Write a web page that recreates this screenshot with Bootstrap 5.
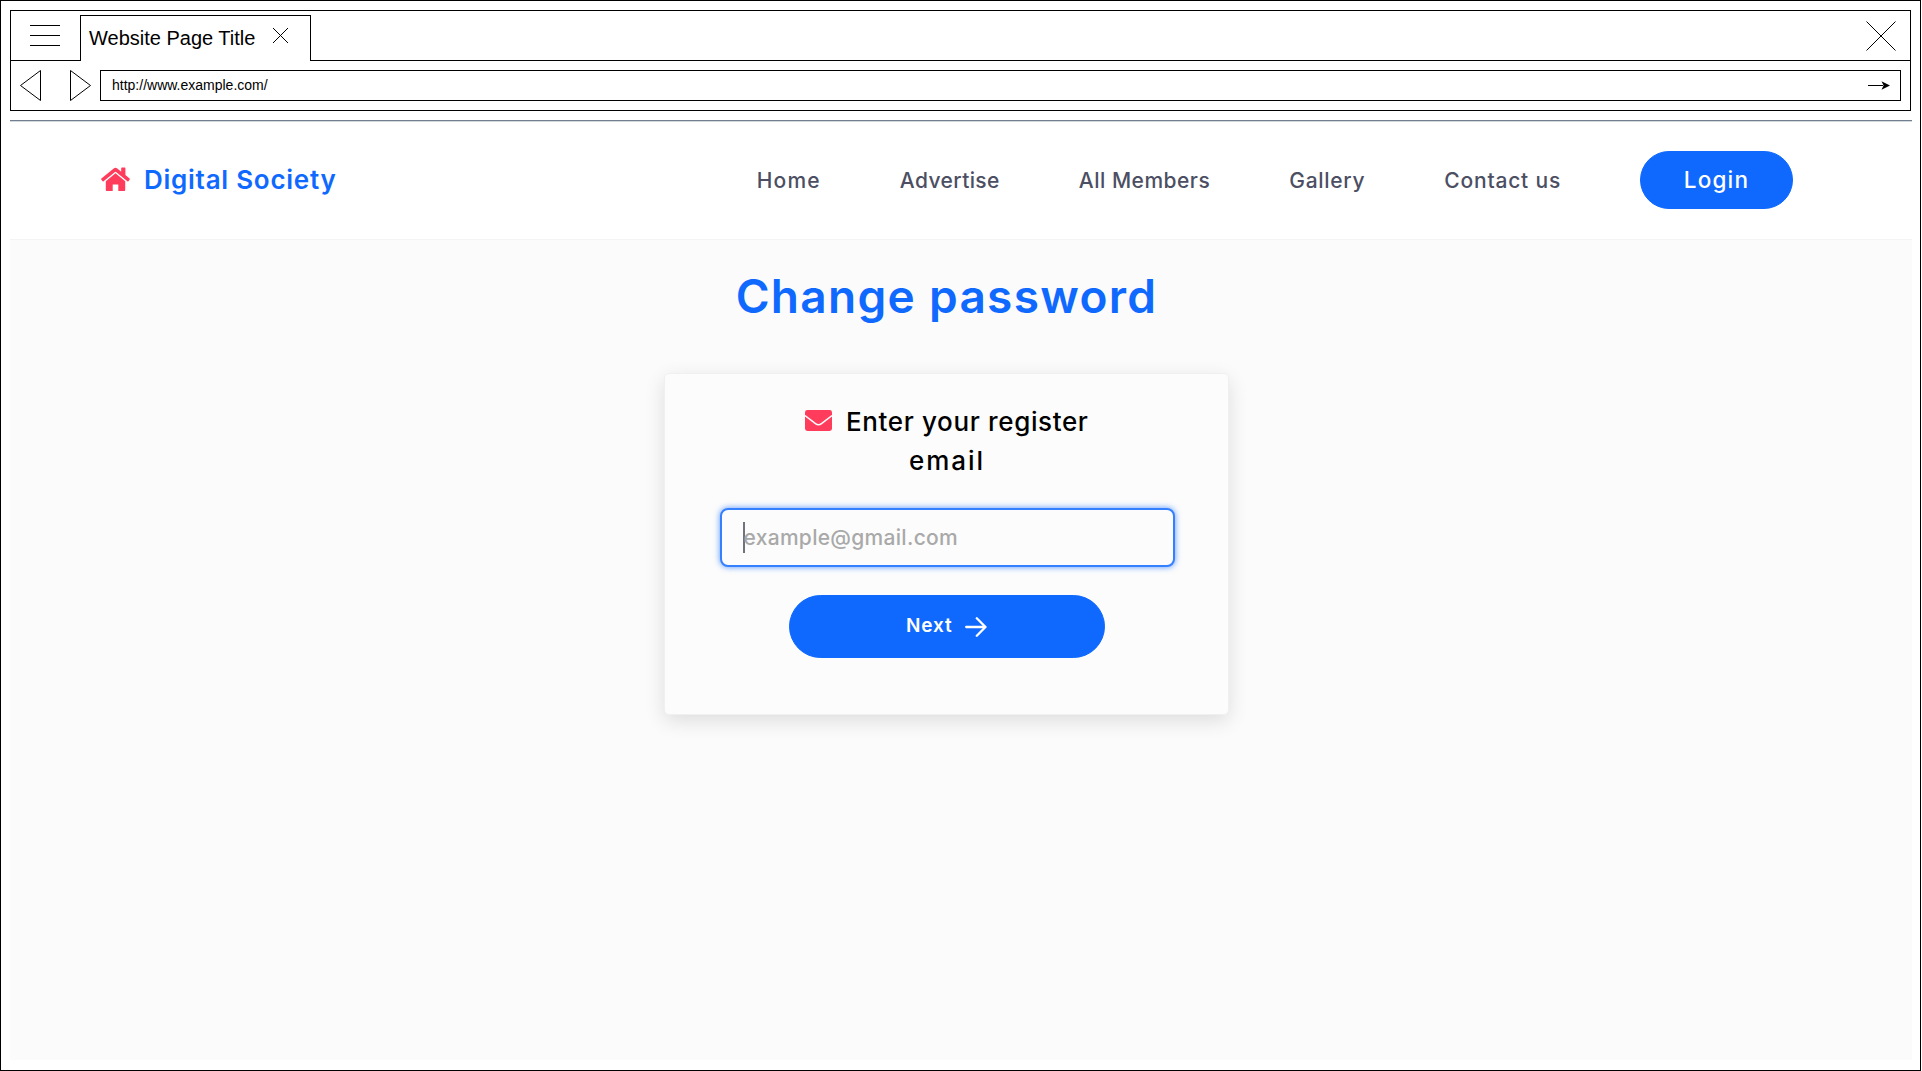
<!DOCTYPE html>
<html lang="en">
<head>
<meta charset="utf-8">
<meta name="viewport" content="width=device-width, initial-scale=1">
<title>Change password - Digital Society</title>
<link href="https://cdn.jsdelivr.net/npm/bootstrap@5.3.0/dist/css/bootstrap.min.css" rel="stylesheet">
<style>
  :root { --brand: #0f69ff; --accent: #ff3c5c; }
  body { background: #fff; overflow: hidden; font-family: Inter, sans-serif; }
  svg { display: block; flex: none; }

  /* Browser window */
  .window-frame { width: 1921px; height: 1071px; border: 1px solid #000; padding: 9px 8px 10px 9px; }
  .chrome { border: 1px solid #000; height: 101px; margin-right: 1px; font-family: "Liberation Sans", sans-serif; color: #000; }
  .tab-strip { height: 50px; border-bottom: 1px solid #000; padding-right: 14px; }
  .menu-icon { margin: 14px 20px 0 19px; }
  .page-tab { width: 231px; height: 46px; margin-bottom: -1px; padding: 6px 21px 0 8px; border: 1px solid #000; border-bottom: 0; background: #fff; font-size: 20px; line-height: 32px; }
  .tab-close { margin-top: 5px; }
  .window-close { margin-top: 10px; }
  .address-row { padding: 9px 9px 0; }
  .nav-arrows { width: 80px; gap: 28px; }
  .address { height: 31px; border: 1px solid #000; padding: 0 10px 0 11px; font-size: 14px; }
  .page-rule { height: 2px; margin-top: 9px; background: #d3d8dd; border-top: 1px solid #708090; }

  /* Page */
  .site-header { height: 118px; padding: 0 119px 1px 91px; border-bottom: 1px solid #f4f4f4; }
  .house-icon { margin-top: -2px; }
  .site-name { color: var(--brand); font-size: 26px; font-weight: 600; letter-spacing: .74px; margin-left: 14px; line-height: 30px; }
  .site-nav { gap: 79px; }
  .site-nav a { color: #4c4f63; font-size: 21px; font-weight: 500; line-height: 30px; padding-top: 1px; text-decoration: none; letter-spacing: .4px; white-space: nowrap; }
  .site-nav .ls-home { letter-spacing: 1.2px; }
  .site-nav .ls-members { letter-spacing: .5px; }
  .site-nav .ls-gallery { letter-spacing: .7px; }
  .site-nav .ls-contact { letter-spacing: .8px; }
  .btn-brand { --bs-btn-bg: var(--brand); --bs-btn-border-color: var(--brand); --bs-btn-color: #fff; --bs-btn-hover-bg: #0a5be0; --bs-btn-hover-color: #fff; }
  .btn-login { width: 153px; height: 58px; font-size: 22.5px; font-weight: 500; letter-spacing: 1.2px; padding: 0; }
  .page-body { background: #fbfbfb; padding: 28px 29px 0 0; }
  .page-title { color: var(--brand); font-size: 46px; font-weight: 600; letter-spacing: 1.3px; line-height: 56px; margin: 0 0 49px; }
  .reset-card { width: 565px; height: 342px; background: #fcfcfc; border: 1px solid #f0f0f0; border-radius: 5px; box-shadow: 0 6px 20px rgba(0,0,0,.12); padding: 28px 53px 0 55px; }
  .prompt { color: #000; font-size: 26px; font-weight: 500; line-height: 39px; letter-spacing: .64px; margin: 0 1px 28px 0; }
  .mail-icon { margin-right: 6px; vertical-align: 0; }
  .prompt-mail { letter-spacing: 2px; }
  .email-input { height: 59px; border: 2px solid #3580ff; border-radius: 8px; background: #fcfcfc; box-shadow: 0 0 6px rgba(15,105,255,.7); padding: 0 21px; }
  .caret { width: 1.5px; height: 31px; background: #70727c; margin-right: -1px; }
  .hint { color: #a9a9a9; font-size: 21px; font-weight: 500; letter-spacing: .3px; }
  .btn-next { width: 316px; height: 63px; margin: 28px 1px 0 0; font-size: 19px; font-weight: 600; letter-spacing: .9px; gap: 12.5px; padding: 0 1px 0 0; }
</style>
</head>
<body>
<div class="window-frame d-flex flex-column">
  <div class="chrome flex-shrink-0">
    <div class="tab-strip d-flex">
      <svg class="menu-icon" width="30" height="22" stroke="#000"><path d="M0 .5h30M0 10.5h30M0 20.5h30"/></svg>
      <div class="page-tab d-flex justify-content-between align-self-end">
        <span>Website Page Title</span>
        <svg class="tab-close" width="17" height="17" stroke="#000"><path d="M1 1l15 15M16 1L1 16"/></svg>
      </div>
      <svg class="window-close ms-auto" width="30" height="30" stroke="#000"><path d="M.5 .5l29 29M29.5 .5l-29 29"/></svg>
    </div>
    <div class="address-row d-flex">
      <div class="nav-arrows d-flex">
        <svg width="22" height="31" fill="none" stroke="#000"><path d="M20.5 .5v30L.5 15.5z"/></svg>
        <svg width="22" height="31" fill="none" stroke="#000"><path d="M.5 .5v30L20.5 15.5z"/></svg>
      </div>
      <div class="address flex-grow-1 d-flex align-items-center justify-content-between">
        <span>http://www.example.com/</span>
        <svg width="22" height="9" viewBox="0 0 22 9"><path d="M0 4.5h15" stroke="#000"/><path d="M22 4.5L13.5 .3 15.6 4.5l-2.1 4.2z"/></svg>
      </div>
    </div>
  </div>
  <div class="page-rule flex-shrink-0"></div>

  <header class="site-header d-flex align-items-center flex-shrink-0">
    <svg class="house-icon" width="29" height="24" viewBox="0 0 29 24" fill="#ff3c5c"><path d="M14.5 6.2L4.8 14.2V23a.9.9 0 0 0 .9.9h6v-6.4h5.6v6.4h6a.9.9 0 0 0 .9-.9v-8.8z"/><path d="M28.6 11.6l-4.2-3.5V1.2a.7.7 0 0 0-.7-.7h-2.8a.7.7 0 0 0-.7.7v3.6L16.3 1.4a2.8 2.8 0 0 0-3.6 0L.4 11.6a.7.7 0 0 0-.1 1l1.3 1.6a.7.7 0 0 0 1 .1L14 4.9a.8.8 0 0 1 1 0l11.4 9.4a.7.7 0 0 0 1-.1l1.3-1.6a.7.7 0 0 0-.1-1z"/></svg>
    <span class="site-name">Digital Society</span>
    <nav class="site-nav d-flex align-items-center ms-auto">
      <a href="#" class="ls-home">Home</a>
      <a href="#">Advertise</a>
      <a href="#" class="ls-members">All Members</a>
      <a href="#" class="ls-gallery">Gallery</a>
      <a href="#" class="ls-contact">Contact us</a>
      <button type="button" class="btn btn-brand btn-login rounded-pill">Login</button>
    </nav>
  </header>

  <main class="page-body flex-grow-1 d-flex flex-column align-items-center">
    <h1 class="page-title">Change password</h1>
    <div class="reset-card d-flex flex-column">
      <h2 class="prompt text-center">
        <svg class="mail-icon d-inline-block" width="27" height="21" viewBox="0 0 27 21"><rect width="27" height="21" rx="2.4" fill="#ff3c5c"/><path d="M0 5.6C4 8.8 8.5 12 10.5 13.6Q13.5 16 16.5 13.6C18.5 12 23 8.8 27 5.6" fill="none" stroke="#fcfcfc" stroke-width="1.5"/></svg>
        Enter your register<br><span class="prompt-mail">email</span>
      </h2>
      <div class="email-input d-flex align-items-center"><span class="caret"></span><span class="hint">example@gmail.com</span></div>
      <button type="button" class="btn btn-brand btn-next rounded-pill d-flex align-items-center justify-content-center align-self-center">
        Next
        <svg width="22" height="20" viewBox="0 0 22 20" fill="none" stroke="#fff" stroke-width="2.3" stroke-linecap="round" stroke-linejoin="round"><path d="M1.2 10H20.5M11.8 1.3L20.5 10l-8.7 8.7"/></svg>
      </button>
    </div>
  </main>
</div>
<script src="https://cdn.jsdelivr.net/npm/bootstrap@5.3.0/dist/js/bootstrap.bundle.min.js"></script>
</body>
</html>
